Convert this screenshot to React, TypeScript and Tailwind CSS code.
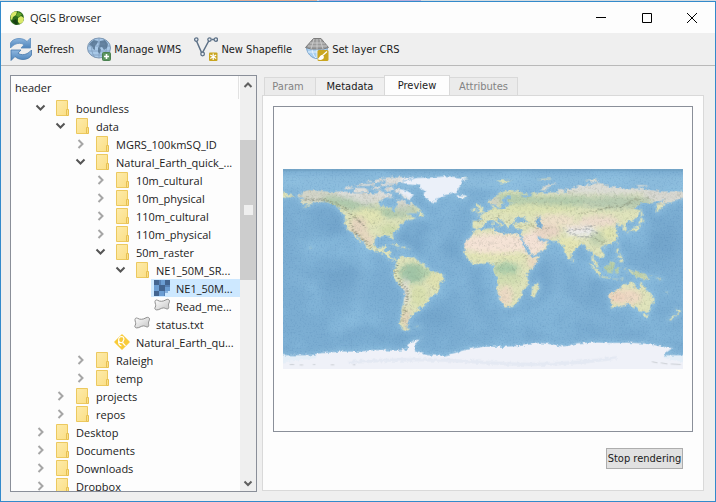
import type { ReactNode } from "react";

type Kind = "folder" | "raster" | "vector" | "qgis";
type Item = {
  label: string;
  level: number;
  kind: Kind;
  state?: "open" | "closed";
  selected?: boolean;
};

const items: Item[] = [
  { label: "boundless", level: 0, kind: "folder", state: "open" },
  { label: "data", level: 1, kind: "folder", state: "open" },
  { label: "MGRS_100kmSQ_ID", level: 2, kind: "folder", state: "closed" },
  { label: "Natural_Earth_quick_...", level: 2, kind: "folder", state: "open" },
  { label: "10m_cultural", level: 3, kind: "folder", state: "closed" },
  { label: "10m_physical", level: 3, kind: "folder", state: "closed" },
  { label: "110m_cultural", level: 3, kind: "folder", state: "closed" },
  { label: "110m_physical", level: 3, kind: "folder", state: "closed" },
  { label: "50m_raster", level: 3, kind: "folder", state: "open" },
  { label: "NE1_50M_SR...", level: 4, kind: "folder", state: "open" },
  { label: "NE1_50M...", level: 5, kind: "raster", selected: true },
  { label: "Read_me...", level: 5, kind: "vector" },
  { label: "status.txt", level: 4, kind: "vector" },
  { label: "Natural_Earth_qu...", level: 3, kind: "qgis" },
  { label: "Raleigh", level: 2, kind: "folder", state: "closed" },
  { label: "temp", level: 2, kind: "folder", state: "closed" },
  { label: "projects", level: 1, kind: "folder", state: "closed" },
  { label: "repos", level: 1, kind: "folder", state: "closed" },
  { label: "Desktop", level: 0, kind: "folder", state: "closed" },
  { label: "Documents", level: 0, kind: "folder", state: "closed" },
  { label: "Downloads", level: 0, kind: "folder", state: "closed" },
  { label: "Dropbox", level: 0, kind: "folder", state: "closed" },
];

const indent = ["w-[21px]", "w-[41px]", "w-[61px]", "w-[81px]", "w-[101px]", "w-[121px]"];

function Chevron({ state }: { state?: "open" | "closed" }) {
  return (
    <svg className="size-4 shrink-0" viewBox="0 0 16 16" fill="none" strokeWidth="2">
      {state === "open" && <path d="M4.5 5.500l4 4 4-4" stroke="#555" />}
      {state === "closed" && <path d="M6.5 4l4 4-4 4" stroke="#a6a6a6" />}
    </svg>
  );
}

function ItemIcon({ kind }: { kind: Kind }) {
  return (
    <svg className="size-4 shrink-0" viewBox="0 0 16 16">
      {kind === "folder" && (
        <>
          <defs>
            <linearGradient id="folder" x1="0" y1="0" x2="1" y2="1">
              <stop offset="0" stopColor="#fdebab" />
              <stop offset="1" stopColor="#fbdf86" />
            </linearGradient>
          </defs>
          <path d="M2.5.5h11v15h-11z" fill="url(#folder)" stroke="#ecc95f" />
          <path d="M12.5 9.5h2v6h-2z" fill="#fbe08a" stroke="#e6c052" />
        </>
      )}
      {kind === "raster" && (
        <g shapeRendering="crispEdges">
          <path d="M0 0h16v16H0z" fill="#6b9dd3" />
          <path d="M0 0h5v5H0zM11 0h5v5h-5zM5 5h6v6H5zM0 11h5v5H0z" fill="#426490" />
          <path d="M5 0h2v5H5zM11 5h5v2h-5zM7 11h4v5H7z" fill="#5680b4" />
          <path d="M11 11h5v5h-5z" fill="#cde8ff" />
          <path d="M5 11h5v5H5z" fill="#6b9dd3" />
          <path d="M11 11h3v2h-3z" fill="#88b3e0" />
        </g>
      )}
      {kind === "vector" && (
        <>
          <defs>
            <linearGradient id="poly" x1="0" y1="0" x2="1" y2="1">
              <stop offset="0" stopColor="#fff" />
              <stop offset="1" stopColor="#c4c4c4" />
            </linearGradient>
          </defs>
          <path
            d="M1 3.500C1.200 2 2.400 1.600 3.600 2.300 6 3.800 9 3.600 12 1.800c1.800-1 3.500-.4 3.500 1.400 0 1.500-1.200 2.300-1 4 .2 1.900.6 3.300-.8 3.700-1.500.3-2.400-1-4.200-1-2.500 0-4.500 2.300-7 2C.8 11.700.5 10.300 1.200 9.200 2.600 7.500.8 5.500 1 3.500z"
            fill="url(#poly)"
            stroke="#8f8f8f"
          />
        </>
      )}
      {kind === "qgis" && (
        <>
          <path d="M8 1l7 7-7 7-7-7z" fill="#f8cb3a" stroke="#f8cb3a" strokeWidth="1.500" strokeLinejoin="round" />
          <path
            d="M8 2.500C5.500 2.500 4.300 4.500 4.700 6.500c.3 1.500 1.500 2.300 3.300 2M8 2.500c2 .6 2.500 3 1.200 4.300-.8 1-.7 2.200.3 3l2 2M4.700 6.500C4 9 5.200 11.500 7.500 12"
            fill="none"
            stroke="#fff"
            strokeWidth="1.200"
          />
        </>
      )}
    </svg>
  );
}

function RefreshIcon() {
  return (
    <svg className="size-6 shrink-0" viewBox="0 0 24 24">
      <defs>
        <linearGradient id="refresh" x1="0" y1="0" x2="0" y2="1">
          <stop offset="0" stopColor="#8fb7df" />
          <stop offset="1" stopColor="#4d84bb" />
        </linearGradient>
      </defs>
      <path d="M.5 11V6C2 3 5.500 1.500 9 1.500c3.500 0 6 1.200 8 3L20.500 1v10h-9.500l3-3.200C11 5.500 5 5.500.5 11z" fill="url(#refresh)" stroke="#5a8bbd" strokeWidth=".8" />
      <path d="M21.500 13v5c-1.500 3-5 4.500-8.500 4.500-3.500 0-6-1.200-8-3L1 23.500V13h10l-3 3.200c3 2.300 9 2.300 13.500-3.200z" fill="url(#refresh)" stroke="#4577aa" strokeWidth=".8" />
    </svg>
  );
}

function WmsIcon() {
  return (
    <svg className="size-6 shrink-0" viewBox="0 0 24 24">
      <ellipse cx="12" cy="11" rx="11.500" ry="10" fill="#a9c9e8" stroke="#7e97b2" />
      <path d="M1 9h22M1 14h22M4 5h16M4 18h16M12 1v20M8 1.500C3.500 7 3.500 15 8 20.500M16 1.500C20.500 7 20.500 15 16 20.500" fill="none" stroke="#7d9cbd" strokeWidth=".8" />
      <path d="M3 6l4-3 4 1-1 3-2 2v4l-2-1-1-3-3-1zM13 4l5-1 3 4-1 4-3 2-2-3-3 1zM11 10l3 2-1 5-2-2z" fill="#54728f" opacity=".8" />
      <rect x="15.500" y="15.500" width="8" height="8" rx="1" fill="#5c9660" stroke="#4a8150" />
      <path d="M19.500 17v5M17 19.500h5" stroke="#fff" strokeWidth="1.600" />
    </svg>
  );
}

function ShapefileIcon() {
  return (
    <svg className="size-6 shrink-0" viewBox="0 0 24 24" fill="none">
      <path d="M2.500 4l5.500 12.500L15 3.500M17.500 2.500h3" stroke="#5d7187" strokeWidth="1.500" />
      <g fill="#e9eef3" stroke="#5d7187" strokeWidth="1.300">
        <circle cx="2.300" cy="2.600" r="1.700" />
        <circle cx="8.600" cy="17" r="1.800" />
        <circle cx="15.500" cy="2.600" r="1.700" />
        <circle cx="21.800" cy="2.600" r="1.700" />
      </g>
      <rect x="15" y="15.500" width="8.500" height="8.500" rx="1" fill="#c9a51f" />
      <path d="M19.200 16.500v6.500M16.300 18l5.900 3.500M22.200 18l-5.900 3.500" stroke="#fff" strokeWidth="1.200" />
    </svg>
  );
}

function CrsIcon() {
  return (
    <svg className="size-6 shrink-0" viewBox="0 0 24 24">
      <path d="M1.500 10h21c0 6-5 11.500-10.500 11.500S1.500 16 1.500 10z" fill="#a9cff0" stroke="#7ba5ce" />
      <path d="M12 11v10M7 11c0 4 1.500 8 4 10M17 11c0 4-1.500 8-4 10M3 15h18" fill="none" stroke="#e6f2fc" />
      <path d="M8.500 1.500h7.500l7.500 9-5 1.500H6L.5 10.500z" fill="#9b9b9b" stroke="#7c7c7c" />
      <path d="M5 6h15M3 9h19M12 2v10M9 2L6 12M15 2l3 10" fill="none" stroke="#d2d2d2" strokeWidth=".8" />
      <rect x="12.500" y="13" width="11" height="11" rx="1.500" fill="#c9a51f" />
      <path d="M22 14.500l-4.500 4M17 18.500c-2 0-1.500 2.500-3.500 3.500 2.500.8 5-.3 4.800-2.300z" fill="#fff" stroke="#fff" strokeWidth="1.200" />
    </svg>
  );
}

/* Outlines are given as longitude,latitude pairs. */
const land = {
  northAmerica:
    "-168,66 -162,67 -164,69 -157,71 -150,70.500 -141,69.700 -135,69 -128,70 -118,69 -115,68 -108,68 -103,68 -97,68 -94,69 -94,72 -90,69 -86,67 -82,69 -82,67 -87,64.500 -94,60.500 -94,58.500 -92,57 -87,56 -82,55 -82,52.500 -79,51.500 -79,54.500 -77,56 -78,59 -77,62 -73,62.300 -70,61 -69,58.800 -66,58.500 -64.500,60.300 -61,56.500 -57.500,54.500 -55.700,52.500 -60,50.200 -66,50.200 -69,48.500 -65,49 -64.500,47 -61,46 -60,45.800 -66,43.700 -67,45 -70,43.800 -70.700,42 -74,40.700 -76,37 -75.700,35.300 -79,33.500 -81.300,31.500 -80.200,27 -80.600,25.200 -82.500,27.500 -83,29.500 -85,29.800 -89,30.300 -91,29.300 -94,29.500 -97,27.800 -97.500,25 -97.800,22.300 -96,19.200 -94.500,18.200 -91.500,18.600 -90.400,20.800 -87,21.500 -88,18.200 -88.800,15.900 -84,15.800 -83.300,14.800 -83.700,11 -82,9 -79.500,9.500 -77.400,8.600 -78,7.500 -80.300,7.400 -83,8.300 -85.800,10.500 -87.600,13 -92,14.500 -94.800,16.200 -98,16.300 -102,18 -105.500,20.300 -105.500,22.500 -109,25.800 -112,29 -113,31.200 -114.800,31.700 -113,29 -110,24.200 -109.600,23 -112,24.800 -112.300,26.200 -115,28 -116,30.400 -117.200,32.600 -120.600,34.500 -122.500,37.500 -124.300,40.300 -124,44 -124.700,48.300 -123,49 -127.500,51 -130,54 -132,57 -135,58.500 -140,59.800 -145,60.400 -150,59.500 -152,60.800 -154,58.500 -158,56.500 -163,54.700 -158,57.800 -157.300,58.800 -162,59 -164,60.500 -166,62 -161,63.700 -161,64.500 -166,64.600",
  southAmerica:
    "-77.400,8.600 -75,11 -71.700,12.300 -71.500,10.500 -68,11.500 -65,10.200 -62,10.600 -60,8.500 -57,6 -52,5 -50,1 -48,-1 -44.500,-2.700 -40,-2.900 -37,-4.800 -35,-6 -35,-9 -38.700,-13 -39,-17.500 -41,-22 -44.500,-23 -48.500,-26 -49,-29 -52.500,-33 -54.500,-34.800 -58,-34 -57,-36.500 -58,-38.300 -62,-39 -62.300,-41 -65,-41 -64,-42.800 -67.400,-46 -66,-48 -69,-50.500 -68.500,-52.500 -65.500,-55 -69,-55.400 -72,-54 -75,-51 -75,-47 -73,-42 -73.500,-37 -71.500,-30 -70.300,-20 -76,-14 -79,-8 -81.200,-5 -80,-3 -80.500,-1 -78.800,1.500 -77.500,4",
  africa:
    "-6,35.800 -2,35 10,37.300 11,33.500 15,32.300 19,30.500 20,32.800 25,31.600 30,31.300 32.500,31.200 32.500,30 35.500,24 37.300,20 39,15.500 43,12 44,10.500 51,12 50.800,10 47,4 42.500,-1 39.500,-5 40.500,-11 40.500,-15 35,-19.500 35.400,-24 32.800,-26 32,-29 28,-33 20,-34.800 18,-33 15,-26.500 12,-17.500 13.500,-11.500 12,-5.500 9,-1 9.700,4 6,4.300 4.500,6.400 -2,4.800 -8,4.300 -13,8.500 -17,14.600 -16.200,19.500 -17,21.500 -13,27.800 -9.800,30 -9.300,32.500",
  eurasia:
    "-9,43.200 -1.700,43.400 -1.200,46 -4.700,48.300 -1.600,48.700 1.700,50.900 4,52 8.300,53.800 8,57 10.600,57.600 10,55 12,54.200 14.300,54 19,54.400 21,55.500 21.500,57.500 24,57.200 23.500,59.200 30,59.900 23,60 21.400,61.500 25.200,65 22,65.700 17.300,62.300 17.200,60.600 18.700,59.800 16.500,57.500 16,56.200 14,55.500 12.800,55.600 11,59 8,58.100 5.500,58.800 5,61.500 10,64 14.500,67.500 20,70 26,71 31,70.300 41,67 40,66.300 33,66.700 37,64.400 40,64.600 44,66 44,68.500 53.500,68.500 60,69 68,68.800 67,71 69,73 73,72.500 73,68 75,69 75,72 81,72.500 87,75 98,76.200 104,77.600 113,75.500 113,73.700 123,73.300 129,71.500 140,72.600 152,71 160,69.700 170,69.700 176,69.800 182,68.800 182,65 177,62.500 170,60 163.500,60 163,57.800 162,56 156.700,51 155.700,56.500 160,60.500 164,62.500 156,61.500 151,59 143,59.300 135.300,54.800 141,53 140,48.500 135,43.800 130.500,42.500 127.500,39.800 129.400,37 129,35.200 126.500,34.500 126.700,37.500 125,38.500 125,40 121.500,39 122,40.600 118,39 119,37.200 122.500,37.200 119.300,35 121.800,31.500 121.500,28.500 118.500,24.500 114,22.300 108.500,21.500 105.800,19 109,13 107,10.400 105,8.700 105,10.500 102.500,12 100.500,13.500 99.300,10 103.300,4.500 104,1.400 101,3 98.500,8 98.500,13 97,17 94.300,16 92,22 89,21.800 87,21.300 82,16.700 80,15 80,11 77.500,8 76,10.500 73,17.500 72.500,21 69,22.300 66.500,25.200 61.500,25.200 57,26.800 51.500,28 48.500,30.200 50,27 51.500,25 54,24.200 56.300,26 59.700,22.500 55,17 45,12.800 43.300,13 42.500,16.500 39,21.500 35,28 34.500,31.500 36,36 32,36.200 27.500,36.800 26.500,39.500 29,41 35,42 41.500,41.300 37.500,44.800 39,47 35,46 33,46.200 31,46.600 28.500,43.800 28,41.500 26,40.800 23.500,40.300 24,38 23,36.500 21.300,37.500 19.500,41 19,42 13.500,45.700 12.300,44.500 14,42.500 18.300,40 16,38.200 15.500,40 12,42 8.800,44.400 3.500,43.300 3,41.800 0,39.800 -0.500,38 -2,36.800 -5.500,36 -9,37 -9.500,38.700",
  australia:
    "113.500,-22.500 114,-26.500 115.700,-32 115,-34.300 118,-35 124,-33.500 131,-31.500 135.500,-34.800 138,-33 138.500,-35.500 141,-38.200 146.500,-39 150,-37.300 151.500,-33 153.500,-28.500 153,-25 149,-20.500 146,-18.500 145.300,-15 143.500,-14 142.500,-10.800 141.500,-13 141,-17.500 139,-17.500 135.500,-15 136.800,-12.200 132.500,-11.500 130.500,-12.800 129,-15 126,-14 122.300,-18 117,-20.700",
  greenland:
    "-73,78.200 -66,80 -60,82 -45,82.500 -32,83.500 -22,82.500 -12,81.500 -18,80 -19,76 -22,73 -22,70.500 -27,68.500 -36,66 -40,65 -43,60 -48,61 -51,64 -53.500,67 -51,70 -55,71.500 -58,75.500 -68,76",
};

const islands = [
  "-5.500,50 1.500,51.200 0,53.500 -2,56 -2,57.500 -5,58.600 -6,56.500 -3,54 -4.500,53 -5,51.700",
  "-10,51.600 -6,52.200 -6,54.500 -8,55.200 -10,54",
  "-24,65.500 -22,64 -18,63.400 -14,65 -16,66.400 -22,66.300",
  "-78,73 -80,70 -73,67 -73,64.500 -66,62 -65,65 -62,66.700 -68,70 -75,72 -86,73.700 -89,70.500 -84,70",
  "-117,69.500 -114,73 -106,73 -102,70 -106,68.800 -113,68.500",
  "-125,72 -123,74.300 -116,73.500 -121,71.500",
  "-100,72 -97,74 -92,74 -96,71",
  "-117,75.500 -110,76.500 -97,76.500 -98,75 -108,74.800",
  "-92,74.700 -80,74.700 -80,75.800 -92,76.700",
  "-89,76.500 -78,76.500 -72,79 -62,82.500 -80,83 -92,81.500 -87,79.500",
  "-96,78 -90,78.500 -92,81 -97,80",
  "-104,78 -99,78.300 -100,79.300 -105,79",
  "-86,64 -80,64 -84,66",
  "-59,47.700 -53,46.800 -53.500,49 -56,51.500",
  "-85,22 -80,23 -74.500,20.200 -77,20 -81,22.300",
  "-74,18.300 -68.500,18.500 -70,20 -73.500,19.800",
  "-67,18 -65.500,18 -65.500,18.500 -67,18.500",
  "-78.300,18.300 -76.300,18 -77,18.600",
  "-61,-52.200 -58,-51.800 -59,-51.200",
  "44,-16 44,-20 43.500,-23 45,-25.500 47,-25 50.400,-15.500 49.300,-12 47,-15",
  "80,9.500 81.800,7 80.500,6",
  "95.300,5.500 98,4 104,-1.500 106,-3 105.700,-5.800 102,-4 98.700,1.500",
  "105.300,-6.500 108.500,-6.700 114.500,-7.700 114.500,-8.700 108,-7.800",
  "116,-8.400 119,-8.400 123,-8.400 120,-9 117,-9",
  "124,-10.200 127,-8.400 125,-8.700",
  "109,1.700 111,1.700 114,4.500 117,7 119,5.200 117.500,1 116,-4 111,-3 109.500,-1",
  "119.500,-5.500 119,-3 120,1 125,1.500 121,0.500 123,-1 121.500,-2 122.500,-5 120.500,-3",
  "127.500,1 128.500,1 128,-1 127.500,0",
  "128,-3 130.500,-3.200 129,-3.500",
  "131,-0.800 134,-0.800 135,-3.300 138,-1.700 145,-4.500 147.500,-6.500 150.500,-10.500 147,-9.500 143,-8.500 138,-8.300 137.500,-5 132.500,-4 133,-2.500",
  "148.500,-5.700 151.500,-5.200 152,-4.200 151,-6",
  "155,-6 160,-9 161.500,-10.500 157,-8",
  "164,-20.300 167,-22.300 165,-21.500",
  "120.500,18.500 122.300,18.300 121.500,15 124,12.800 121,13.700 120,16",
  "122,7 124,8.500 126,9.500 126.300,7 125,6",
  "122,11.800 125,12.300 125,10.500 122.500,9.500",
  "117.300,8.500 119.500,11.200 118,9",
  "120.200,23 121.500,25.200 121,22",
  "108.700,19.200 110.800,20 109.800,18.300",
  "130,31.300 131.800,31.500 131,33.800 129.700,33",
  "131,34.300 135.500,34.500 137,34.700 140,35.200 142,39.500 141,41.400 139.800,38.500 136.800,37.200 133,35.500",
  "140,41.600 143.300,42 145.500,43.300 142,45.500 141.300,43.300",
  "142,46.500 143.500,49.300 143,53 142,54.200 142,50",
  "144.700,-40.800 148.200,-41 147,-43.500 145.700,-43",
  "172.700,-34.500 175.500,-37 178.500,-37.800 177,-39.500 175.200,-41.600 175,-39.500 174.700,-37",
  "172.700,-40.600 174,-41.500 171,-44 169,-46.600 166.500,-46 170,-43",
  "52,71 57,70.700 57,73 66,76.500 68,77 60,76 54,73.500",
  "12,79.500 20,80 27,80 18,77 15,77.500",
  "48,80.500 60,81.500 62,80.500 54,80",
  "92,80 100,81 105,79 99,78",
  "138,75.500 147,75.500 150,74.800 140,74",
  "179,71 182,71.200 182,70.800",
  "-182,69 -180,68.900 -175,67 -170,66 -173,64.400 -180,65 -182,65",
  "8.300,39 9.500,39.200 9.500,42.500 8.500,41",
  "12.500,38 15.500,38.200 15,36.800",
  "23.500,35.500 26.300,35.200 24,35",
  "32.500,35 34.500,35.500 33,34.700",
  "-155.900,20 -154.900,19.500 -155.800,19",
];

const antarctica =
  "-182,-78 -165,-78.500 -155,-77.500 -148,-76 -137,-75 -128,-74.200 -110,-74.500 -100,-73 -90,-73 -78,-73.500 -68,-72.500 -67,-68 -61,-64 -57,-63.300 -60,-66 -62,-70 -61,-74.500 -50,-77.500 -35,-78 -25,-75.500 -12,-72 0,-70 20,-70 35,-69 50,-66.500 60,-67.500 70,-69.500 75,-69.500 85,-66.800 100,-66 115,-66.500 130,-66.300 145,-67 160,-69.500 170,-71.500 165,-75 163,-78 182,-78.500 182,-92 -182,-92";

function LandShapes() {
  return (
    <>
      {Object.values(land).map((points) => (
        <polygon key={points} points={points} />
      ))}
      {islands.map((points) => (
        <polygon key={points} points={points} />
      ))}
    </>
  );
}

/* Patches of relief colour: longitude, latitude, radii, tint, tilt. */
const patches: [number, number, number, number, string, number?][] = [
  [-100, 75, 75, 15, "#dfdfdc"],
  [-150, 67, 20, 9, "#d3d5c9"],
  [110, 75, 75, 8, "#dcddd7"],
  [170, 66, 26, 8, "#d8d8d2"],
  [-118, 58, 28, 5, "#afc9ac", -12],
  [-88, 51, 22, 4, "#abc7a9", -8],
  [-70, 53, 12, 5, "#bccdb5"],
  [-72, 60, 9, 5, "#d4d6cd"],
  [-103, 63, 12, 5, "#d9dad3"],
  [-104, 47, 14, 8, "#e2e5b5"],
  [-112, 38, 8, 9, "#e5d5bf"],
  [-104, 27, 5, 7, "#e6d7bf", 40],
  [-84, 35, 9, 5, "#cfdaaa"],
  [-63, -4, 12, 9, "#a0c4a6"],
  [-52, -3, 8, 4, "#aecdab"],
  [-42, -10, 8, 8, "#dfe1b1"],
  [-58, -24, 8, 9, "#d8dfae"],
  [-70, -21, 3, 13, "#e6e2dc"],
  [-69, -45, 4, 9, "#e2d3ba"],
  [12, 23, 34, 9, "#f5e3d6"],
  [46, 24, 12, 11, "#f4e2d6", 40],
  [12, 11, 35, 3, "#e4e6b6"],
  [21, 0, 11, 6, "#aacca9"],
  [22, -9, 14, 5, "#d0dcb0"],
  [20, -24, 7, 9, "#ecdac5"],
  [45, 6, 5, 6, "#ead8c2", 40],
  [30, 63, 22, 5, "#b5cdae"],
  [75, 61, 35, 5, "#b2caac"],
  [120, 60, 32, 6, "#b8cbb1"],
  [10, 61, 5, 7, "#d0d3c3", 40],
  [45, 54, 40, 4, "#dde3b2"],
  [65, 44, 18, 5, "#eee0ca"],
  [58, 34, 12, 6, "#e8d5c5"],
  [104, 43, 18, 5, "#eddccd"],
  [88, 34, 14, 5, "#ececec"],
  [82, 38, 10, 2, "#f0e0d4"],
  [103, 27, 8, 6, "#c0cfae"],
  [78, 22, 10, 8, "#e4e5b4"],
  [114, 32, 7, 6, "#e1e5b2"],
  [115, 0, 10, 8, "#b6cea8"],
  [140, -5, 11, 4, "#bdd0ac"],
  [128, -25, 15, 7, "#eed9c4"],
  [119, -26, 8, 4, "#edd3bf"],
  [-42, 73, 34, 16, "#ebf0f9"],
];

/* Deep basins and shallow ridges of the ocean floor. */
const basins: [number, number, number, number][] = [
  [-60, 30, 14, 16],
  [-42, -43, 14, 8],
  [-30, 15, 8, 12],
  [-5, -20, 9, 16],
  [160, 25, 14, 20],
  [-140, 40, 22, 12],
  [-130, -5, 26, 14],
  [60, -5, 9, 12],
  [92, -18, 12, 14],
  [110, -48, 30, 6],
  [-100, -60, 40, 5],
  [30, -55, 40, 5],
];

const ridges = "M-30,62 -35,50 -30,38 -44,25 -42,10 -20,0 -14,-20 -14,-40 0,-52M62,20 66,0 68,-22 60,-35 M70,-25 90,-40 120,-52M-110,20 -105,0 -112,-25 -115,-45 -135,-58M90,10 90,-25M-170,25 -158,20M-175,-5 -150,-17";

function WorldMap() {
  return (
    <svg className="block w-full" viewBox="-180 -90 360 180" role="img" aria-label="World map">
      <defs>
        <clipPath id="land">
          <LandShapes />
        </clipPath>
        <filter id="coast" x="-10%" y="-10%" width="120%" height="120%" colorInterpolationFilters="sRGB">
          <feTurbulence type="fractalNoise" baseFrequency=".3" numOctaves="2" seed="4" />
          <feDisplacementMap in="SourceGraphic" scale="4" xChannelSelector="R" yChannelSelector="G" />
        </filter>
        <filter id="soft" x="-20%" y="-20%" width="140%" height="140%">
          <feGaussianBlur stdDeviation="2.500" />
        </filter>
        <filter id="deep" x="-20%" y="-20%" width="140%" height="140%">
          <feGaussianBlur stdDeviation="5" />
        </filter>
        <filter id="seabed" x="0" y="0" width="100%" height="100%" colorInterpolationFilters="sRGB">
          <feTurbulence type="fractalNoise" baseFrequency=".025 .03" numOctaves="5" seed="11" />
          <feColorMatrix values="0 0 0 0 .6  0 0 0 0 .8  0 0 0 0 .92  2.600 0 0 0 -1.100" />
        </filter>
        <filter id="relief" x="0" y="0" width="100%" height="100%" colorInterpolationFilters="sRGB">
          <feTurbulence type="fractalNoise" baseFrequency=".6" numOctaves="2" seed="7" />
          <feColorMatrix values="0 0 0 0 .36  0 0 0 0 .4  0 0 0 0 .35  3 0 0 0 -1.600" />
        </filter>
        <filter id="grain" x="0" y="0" width="100%" height="100%" colorInterpolationFilters="sRGB">
          <feTurbulence type="fractalNoise" baseFrequency=".7" numOctaves="1" seed="3" />
          <feColorMatrix values="0 0 0 0 .2  0 0 0 0 .4  0 0 0 0 .6  2 0 0 0 -1" />
        </filter>
      </defs>
      <rect x="-180" y="-90" width="360" height="180" fill="#7badd2" />
      <g transform="scale(1 -1)">
        <g filter="url(#deep)" fill="#6d9fc6" opacity=".5">
          {basins.map(([x, y, rx, ry]) => (
            <ellipse key={`${x} ${y}`} cx={x} cy={y} rx={rx} ry={ry} />
          ))}
          <path d={ridges} fill="none" stroke="#8fbfe0" strokeWidth="7" />
        </g>
        <g filter="url(#soft)" fill="#8bbbdc" stroke="#8bbbdc" strokeWidth="4">
          <LandShapes />
          <rect x="-185" y="74" width="370" height="9" />
          <polygon points={antarctica} />
        </g>
      </g>
      <rect x="-180" y="-90" width="360" height="180" filter="url(#seabed)" opacity=".35" />
      <rect x="-180" y="-90" width="360" height="180" filter="url(#grain)" opacity=".25" />
      <rect x="-180" y="-90" width="360" height="2" fill="#6f9fc2" opacity=".7" />
      <g filter="url(#coast)">
        <g transform="scale(1 -1)">
          <g clipPath="url(#land)">
            <rect x="-180" y="-90" width="360" height="180" fill="#e0e4bc" />
            <g filter="url(#soft)">
              {patches.map(([x, y, rx, ry, fill, tilt]) => (
                <ellipse key={`${x} ${y}`} cx={x} cy={y} rx={rx} ry={ry} fill={fill} transform={`rotate(${tilt ?? 0} ${x} ${y})`} />
              ))}
            </g>
          </g>
          <polygon points="47,45 51,47 53,46.500 53,45 51,44 53,41 54,37 50,37.300 49,40.500 47.500,43" fill="#7fb0d6" />
          <polygon points={antarctica} fill="#eff1f8" />
          <path d="M-182-77.500H-150V-80L-182-84zM163-77.500H182V-84L163-80z" fill="#e4eef7" />
          <path d="M-120-84Q-60-79 0-84T120-80" fill="none" stroke="#e4e9f3" strokeWidth="3" />
        </g>
        <g transform="scale(1 -1)" clipPath="url(#land)" opacity=".35">
          <rect x="-180" y="-90" width="360" height="149" filter="url(#relief)" />
          <rect x="-180" y="59" width="105" height="26" filter="url(#relief)" />
          <rect x="0" y="59" width="180" height="26" filter="url(#relief)" />
        </g>
      </g>
      <g transform="scale(1 -1)" fill="none" strokeDasharray="1 1.500" opacity=".5" filter="url(#coast)">
        <path d="M-160,62 -148,63 -138,61 -128,57 -120,50 -112,44 -106,37M-120,45 -118,36 -108,27 -100,19M-76,6 -79,-4 -74,-13 -68,-18 -68,-26 -70,-36 -73,-48" stroke="#59604f" strokeWidth="2" />
        <path d="M72,37 78,33 86,29 96,29 102,33 94,36 84,35 76,35M92,38 100,39" stroke="#687078" strokeWidth="1.500" />
        <path d="M-5,43 2,43M7,46 15,47M21,42 26,46M30,38 44,40 50,36 60,37M86,50 98,51 110,55 125,56 135,62 150,64M100,28 106,24 114,26M38,12 40,8" stroke="#737861" strokeWidth="1.500" />
      </g>
      <path d="M-174 86h4m5 .4h3m9-.4h2m14 .3h3m17 0h2M152 83.500l5 1m3 0l6 1m3 0l9 .5" stroke="#a2a9ad" strokeWidth=".7" opacity=".6" />
    </svg>
  );
}

function ToolButton({ icon, children }: { icon: ReactNode; children: string }) {
  return (
    <button className="flex items-center gap-[3px] whitespace-nowrap">
      {icon}
      <span className="pt-0.5">{children}</span>
    </button>
  );
}

export default function App() {
  return (
    <div className="flex h-screen flex-col bg-[#efefef] font-['DejaVu_Sans_Condensed','DejaVu_Sans',sans-serif] text-[11px] leading-4 text-[#1b1b1b]">
      <div className="flex h-px shrink-0 bg-[#d5dde2]">
        <div className="ml-[230px] w-[87px] bg-[#dfae98]" />
        <div className="ml-0.5 w-[102px] bg-[#b9aedc]" />
      </div>
      <div className="flex min-h-0 flex-1 flex-col border border-[#338acb]">
        <header className="flex h-[31px] shrink-0 items-center bg-[#fdfdfd] pl-2 font-['Open_Sans','Noto_Sans',sans-serif]">
          <svg className="mr-[5px] size-4" viewBox="0 0 16 16">
            <circle cx="8" cy="8" r="7" fill="#2c6a1c" />
            <path d="M2 5c1-3 4-4 6-3.500L7 5 4 7 3 10 1.500 9zM9 8l3-2 3 2-1 4-3 2-2-2z" fill="#d9e86a" />
            <path d="M9 2l4 2-3 3-3-1z" fill="#62a42c" />
            <path d="M3 11l4-2 2 4-2 2z" fill="#173f12" />
          </svg>
          <h1 className="flex-1">QGIS Browser</h1>
          <button aria-label="Minimize" className="flex h-full w-[46px] items-center justify-center">
            <svg className="size-3" viewBox="0 0 12 12" stroke="#000"><path d="M1 5.500h10" /></svg>
          </button>
          <button aria-label="Maximize" className="flex h-full w-[45px] items-center justify-center">
            <svg className="size-3" viewBox="0 0 12 12" stroke="#000" fill="none"><path d="M1.500 1.500h9v9h-9z" /></svg>
          </button>
          <button aria-label="Close" className="flex h-full w-[46px] items-center justify-center">
            <svg className="size-3" viewBox="0 0 12 12" stroke="#000"><path d="M1 1l10 10M11 1L1 11" /></svg>
          </button>
        </header>

        <nav aria-label="Toolbar" className="flex h-[33px] shrink-0 items-center gap-[13px] border-b border-[#b9b9b9] pl-[9px]">
          <ToolButton icon={<RefreshIcon />}>Refresh</ToolButton>
          <ToolButton icon={<WmsIcon />}>Manage WMS</ToolButton>
          <ToolButton icon={<ShapefileIcon />}>New Shapefile</ToolButton>
          <ToolButton icon={<CrsIcon />}>Set layer CRS</ToolButton>
        </nav>

        <main className="flex min-h-0 flex-1 gap-[5px] pt-[9px] pr-[11px] pb-[9px] pl-[9px]">
          <section className="flex w-[247px] shrink-0 border border-[#8a8f99] bg-[#fdfdfd] font-['Open_Sans','Noto_Sans',sans-serif]">
            <div className="flex min-w-0 flex-1 flex-col overflow-hidden">
              <div className="mr-px h-[23px] shrink-0 border-r border-[#e2e2e2] pl-1 leading-6">header</div>
              <ul role="tree" aria-label="Files" className="min-h-0 flex-1 overflow-hidden">
                {items.map((item) => (
                  <li
                    key={item.label}
                    role="treeitem"
                    aria-selected={!!item.selected}
                    aria-expanded={item.state && item.state === "open"}
                    className="flex h-[18px] items-center"
                  >
                    <span className={`shrink-0 ${indent[item.level]}`} />
                    <Chevron state={item.state} />
                    <span className="w-[3px] shrink-0" />
                    <span className={`flex h-full flex-1 items-center gap-1.5 pl-[3px] whitespace-nowrap ${item.selected ? "bg-[#cde8ff]" : ""}`}>
                      <ItemIcon kind={item.kind} />
                      <span className="pt-0.5">{item.label}</span>
                    </span>
                  </li>
                ))}
              </ul>
            </div>
            <div className="flex w-4 shrink-0 flex-col bg-[#efefef]">
              <button aria-label="Scroll up" className="flex h-[17px] items-center justify-center">
                <svg className="size-3" viewBox="0 0 12 12" fill="none" stroke="#606060" strokeWidth="2"><path d="M2.500 8L6 4.500 9.500 8" /></svg>
              </button>
              <div className="h-[47px]" />
              <div className="flex h-[140px] items-center justify-center bg-[#cdcdcd]">
                <div className="h-2.5 w-[9px] bg-[#efefef]" />
              </div>
              <div className="flex-1" />
              <button aria-label="Scroll down" className="flex h-[17px] items-center justify-center">
                <svg className="size-3" viewBox="0 0 12 12" fill="none" stroke="#606060" strokeWidth="2"><path d="M2.500 4.500L6 8l3.500-3.500" /></svg>
              </button>
            </div>
          </section>

          <section className="mb-px flex min-w-0 flex-1 flex-col">
            <div role="tablist" className="flex h-5 shrink-0 items-end pl-0.5">
              <button role="tab" disabled className="h-[18px] w-[52px] border border-b-0 border-[#d9d9d9] bg-[#ebebeb] pr-1 text-[#838383]">Param</button>
              <button role="tab" className="h-[18px] w-[68px] border-t border-[#d9d9d9] bg-[#efefef]">Metadata</button>
              <button role="tab" aria-selected className="-mb-px h-[21px] w-[66px] border border-b-0 border-[#d9d9d9] bg-[#fdfdfd]">Preview</button>
              <button role="tab" disabled className="h-[18px] w-[68px] border border-b-0 border-l-0 border-[#d9d9d9] bg-[#ebebeb] text-[#838383]">Attributes</button>
            </div>
            <div role="tabpanel" className="flex min-h-0 flex-1 flex-col gap-4 border border-[#d9d9d9] bg-[#fdfdfd] px-2.5 pt-2.5 pb-[21px]">
              <div className="flex min-h-0 flex-1 items-center border border-[#8a8f99] px-[9px]">
                <WorldMap />
              </div>
              <button className="mr-2.5 h-[21px] w-[77px] self-end border border-[#adadad] bg-[#e1e1e1] whitespace-nowrap">Stop rendering</button>
            </div>
          </section>
        </main>
      </div>
    </div>
  );
}
